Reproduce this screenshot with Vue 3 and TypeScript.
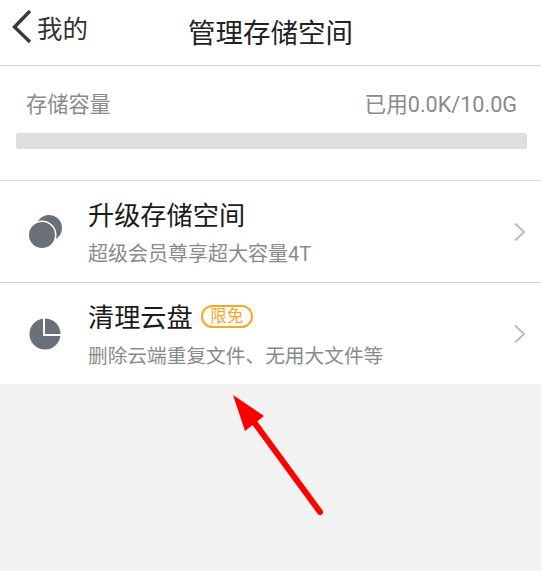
<script setup lang="ts">
interface Row {
  title: string
  sub: string
  badge?: string
  icon: 'coins' | 'pie'
}
const rows: Row[] = [
  { title: '升级存储空间', sub: '超级会员尊享超大容量4T', icon: 'coins' },
  { title: '清理云盘', sub: '删除云端重复文件、无用大文件等', badge: '限免', icon: 'pie' },
]
</script>

<template>
  <div class="page">
    <header class="nav">
      <div class="back">
        <svg class="back-icon" width="22" height="36" viewBox="0 0 22 36">
          <path d="M19 2 L3.5 18 L19 33" fill="none" stroke="#3a3a3a" stroke-width="3.4" />
        </svg>
        <span>我的</span>
      </div>
      <h1 class="title">管理存储空间</h1>
    </header>

    <section class="storage">
      <div class="storage-head">
        <span>存储容量</span>
        <span class="used">已用0.0K/10.0G</span>
      </div>
      <div class="bar"></div>
    </section>

    <section class="list">
      <div v-for="row in rows" :key="row.title" class="row">
        <svg class="row-icon" width="36" height="36" viewBox="0 0 36 36">
          <template v-if="row.icon === 'coins'">
            <circle cx="22" cy="14" r="13" fill="#6a7077" />
            <circle cx="15" cy="21" r="14.5" fill="#fff" />
            <circle cx="15" cy="21" r="13" fill="#6a7077" />
          </template>
          <template v-else>
            <circle cx="18" cy="18" r="15.5" fill="#6a7077" />
            <path d="M16 0 H36 V20 H16 Z" fill="#fff" />
            <path d="M18 2.5 A15.5 15.5 0 0 1 33.5 18 H18 Z" fill="#6a7077" />
          </template>
        </svg>
        <div class="row-text">
          <div class="row-title">
            <span>{{ row.title }}</span>
            <span v-if="row.badge" class="badge">{{ row.badge }}</span>
          </div>
          <div class="row-sub">{{ row.sub }}</div>
        </div>
        <svg class="chevron" width="14" height="20" viewBox="0 0 14 20">
          <path d="M2 1.5 L11 10 L2 18.5" fill="none" stroke="#bdbdbd" stroke-width="2" />
        </svg>
      </div>
    </section>

    <svg class="arrow" width="541" height="571" viewBox="0 0 541 571">
      <line x1="320" y1="512" x2="254" y2="422" stroke="#ff0000" stroke-width="6" stroke-linecap="round" />
      <polygon points="233,395 264,416 245,431" fill="#ff0000" />
    </svg>
  </div>
</template>

<style scoped>
.page {
  position: relative;
  width: 541px;
  height: 571px;
  overflow: hidden;
  background: #f2f2f2;
  font-family: "Roboto", "Noto Sans CJK SC", sans-serif;
}
.nav {
  position: relative;
  height: 65px;
  background: #fff;
  border-bottom: 1px solid #cfcfcf;
  display: flex;
  align-items: center;
  justify-content: center;
}
.back {
  position: absolute;
  left: 11px;
  top: 8px;
  display: flex;
  align-items: center;
  gap: 4px;
  font-size: 25.5px;
  color: #333;
}
.title {
  margin: 0 0 3px;
  font-size: 27.5px;
  font-weight: 400;
  color: #222;
}
.storage {
  height: 114px;
  background: #fff;
  border-bottom: 1px solid #dedede;
  padding: 0 14px 0 16px;
}
.storage-head {
  display: flex;
  justify-content: space-between;
  padding: 25px 10px 0 10px;
  height: 42px;
  line-height: 27px;
  font-size: 21.2px;
  color: #8a8a8a;
}
.used {
  font-size: 21.6px;
}
.bar {
  height: 16px;
  border-radius: 3px;
  background: #dedede;
}
.list {
  background: #fff;
}
.row {
  height: 101px;
  display: flex;
  align-items: center;
  padding: 0 14px 0 27px;
  border-bottom: 1px solid #cfcfcf;
}
.row:last-child {
  border-bottom: none;
}
.row-icon {
  flex: none;
}
.row-text {
  flex: 1;
  margin-left: 25px;
}
.row-title {
  display: flex;
  align-items: center;
  gap: 8px;
  height: 36px;
  font-size: 26.2px;
  color: #1a1a1a;
}
.badge {
  box-sizing: border-box;
  width: 52px;
  height: 23px;
  line-height: 20px;
  text-align: center;
  border: 2px solid #f9a825;
  border-radius: 12px;
  font-size: 16.5px;
  color: #f9a825;
}
.row-sub {
  margin-top: 9px;
  font-size: 20px;
  line-height: 26px;
  color: #8a8a8a;
}
.row:last-child .row-title {
  margin-top: 1px;
}
.row:last-child .row-sub {
  margin-top: 10px;
  font-size: 19.7px;
}
.chevron {
  flex: none;
}
.arrow {
  position: absolute;
  left: 0;
  top: 0;
  pointer-events: none;
}
</style>
